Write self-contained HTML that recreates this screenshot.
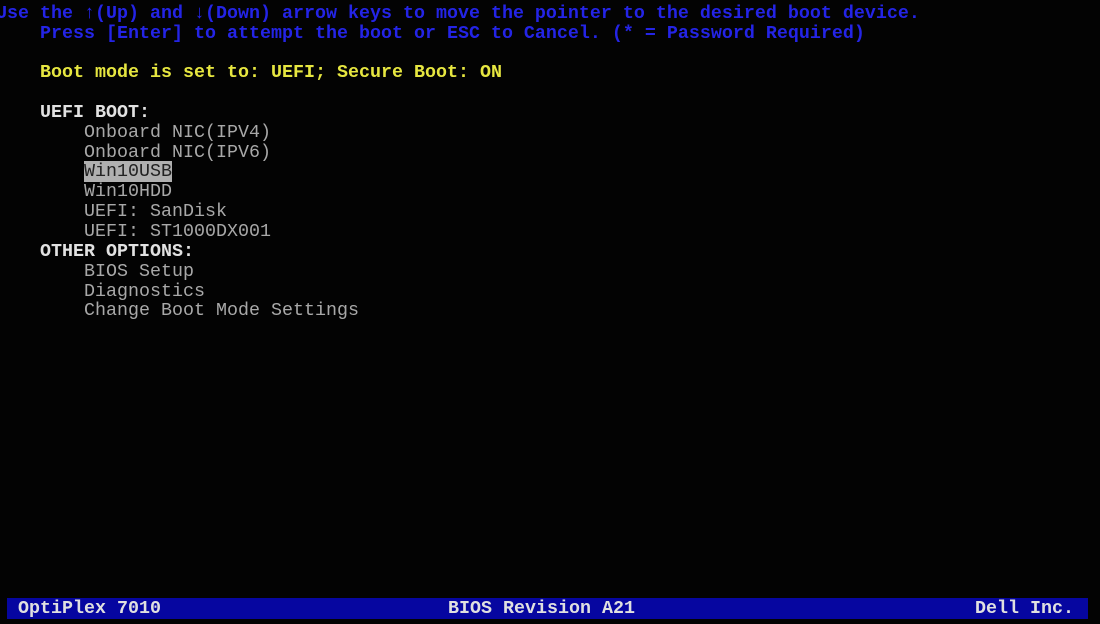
<!DOCTYPE html>
<html><head><meta charset="utf-8"><style>
html,body{margin:0;padding:0;background:#030303;width:1100px;height:624px;overflow:hidden}
.l{position:absolute;left:-4px;font-family:"Liberation Mono","DejaVu Sans Mono",monospace;font-size:18.33px;line-height:20px;white-space:pre;font-weight:bold;letter-spacing:0}
.b{color:#2424e6}.y{color:#e6e640}.w{color:#e2e2e2}.g{color:#a8a8a8;font-weight:normal}
.hl{background:#b0b0b0;color:#222}
#bar{position:absolute;left:7px;top:598px;width:1081px;height:21px;background:#0606a0}
.t{position:absolute;top:598px;font-family:"Liberation Mono",monospace;font-size:18.33px;line-height:21px;color:#e0e0e0;font-weight:bold;white-space:pre}
</style></head><body>
<div class="l b" style="top:4px">Use the ↑(Up) and ↓(Down) arrow keys to move the pointer to the desired boot device.</div>
<div class="l b" style="top:24px">    Press [Enter] to attempt the boot or ESC to Cancel. (* = Password Required)</div>
<div class="l y" style="top:63px">    Boot mode is set to: UEFI; Secure Boot: ON</div>
<div class="l w" style="top:103px">    UEFI BOOT:</div>
<div class="l g" style="top:123px">        Onboard NIC(IPV4)</div>
<div class="l g" style="top:143px">        Onboard NIC(IPV6)</div>
<div class="l g" style="top:162px">        <span class="hl">Win10USB</span></div>
<div class="l g" style="top:182px">        Win10HDD</div>
<div class="l g" style="top:202px">        UEFI: SanDisk</div>
<div class="l g" style="top:222px">        UEFI: ST1000DX001</div>
<div class="l w" style="top:242px">    OTHER OPTIONS:</div>
<div class="l g" style="top:262px">        BIOS Setup</div>
<div class="l g" style="top:282px">        Diagnostics</div>
<div class="l g" style="top:301px">        Change Boot Mode Settings</div>
<div id="bar"></div>
<div class="t" style="left:18px">OptiPlex 7010</div>
<div class="t" style="left:448px">BIOS Revision A21</div>
<div class="t" style="left:975px">Dell Inc.</div>
</body></html>
